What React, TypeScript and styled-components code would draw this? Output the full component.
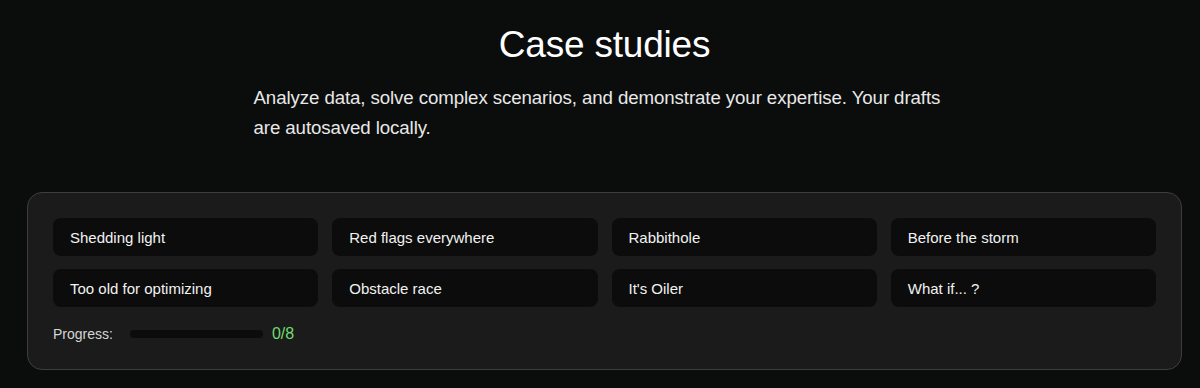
import React from 'react';
import styled, { createGlobalStyle } from 'styled-components';

const GlobalStyle = createGlobalStyle`
  html, body {
    margin: 0;
    padding: 0;
    background: #0b0c0c;
  }
  body {
    font-family: "Liberation Sans", Arial, sans-serif;
    color: #f2f2f2;
  }
`;

const Page = styled.div`
  width: 1200px;
  height: 388px;
  box-sizing: border-box;
  padding: 0 18px 0 27px;
  display: flex;
  flex-direction: column;
  align-items: center;
  overflow: hidden;
`;

const Title = styled.h1`
  margin: 25px 0 0;
  font-size: 37px;
  line-height: 40px;
  font-weight: 400;
  letter-spacing: -0.2px;
  color: #ffffff;
`;

const Lead = styled.p`
  margin: 18px 0 0;
  width: 702px;
  font-size: 18.7px;
  line-height: 30px;
  color: #e8e8e8;
  letter-spacing: -0.1px;
`;

const Panel = styled.section`
  margin-top: 49px;
  width: 100%;
  box-sizing: border-box;
  padding: 25px 25px 27px;
  background: #1a1b1a;
  border: 1px solid #3d3e3d;
  border-radius: 15px;
`;

const Grid = styled.div`
  display: grid;
  grid-template-columns: repeat(4, 1fr);
  column-gap: 14px;
  row-gap: 13px;
`;

const Study = styled.button`
  height: 38px;
  box-sizing: border-box;
  padding: 0 17px;
  border: none;
  border-radius: 8px;
  background: #0b0c0b;
  color: #f2f2f2;
  font-family: inherit;
  font-size: 15px;
  text-align: left;
  cursor: pointer;
`;

const ProgressRow = styled.div`
  margin-top: 18px;
  display: flex;
  align-items: center;
  height: 17px;
`;

const ProgressLabel = styled.span`
  font-size: 14px;
  color: #d6d6d6;
  margin-right: 17px;
`;

const Track = styled.div`
  width: 133px;
  height: 8px;
  border-radius: 4px;
  background: #0b0c0b;
  overflow: hidden;
`;

const Fill = styled.div`
  height: 100%;
  background: #6fdc6f;
`;

const Count = styled.span`
  margin-left: 9px;
  font-size: 16px;
  color: #6fdc6f;
`;

const studies = [
  'Shedding light',
  'Red flags everywhere',
  'Rabbithole',
  'Before the storm',
  'Too old for optimizing',
  'Obstacle race',
  "It's Oiler",
  'What if... ?',
];

export default function App() {
  const done = 0;
  return (
    <>
      <GlobalStyle />
      <Page>
        <Title>Case studies</Title>
        <Lead>
          Analyze data, solve complex scenarios, and demonstrate your expertise. Your drafts
          are autosaved locally.
        </Lead>
        <Panel>
          <Grid>
            {studies.map((s) => (
              <Study key={s}>{s}</Study>
            ))}
          </Grid>
          <ProgressRow>
            <ProgressLabel>Progress:</ProgressLabel>
            <Track>
              <Fill style={{ width: `${(done / studies.length) * 100}%` }} />
            </Track>
            <Count>
              {done}/{studies.length}
            </Count>
          </ProgressRow>
        </Panel>
      </Page>
    </>
  );
}
